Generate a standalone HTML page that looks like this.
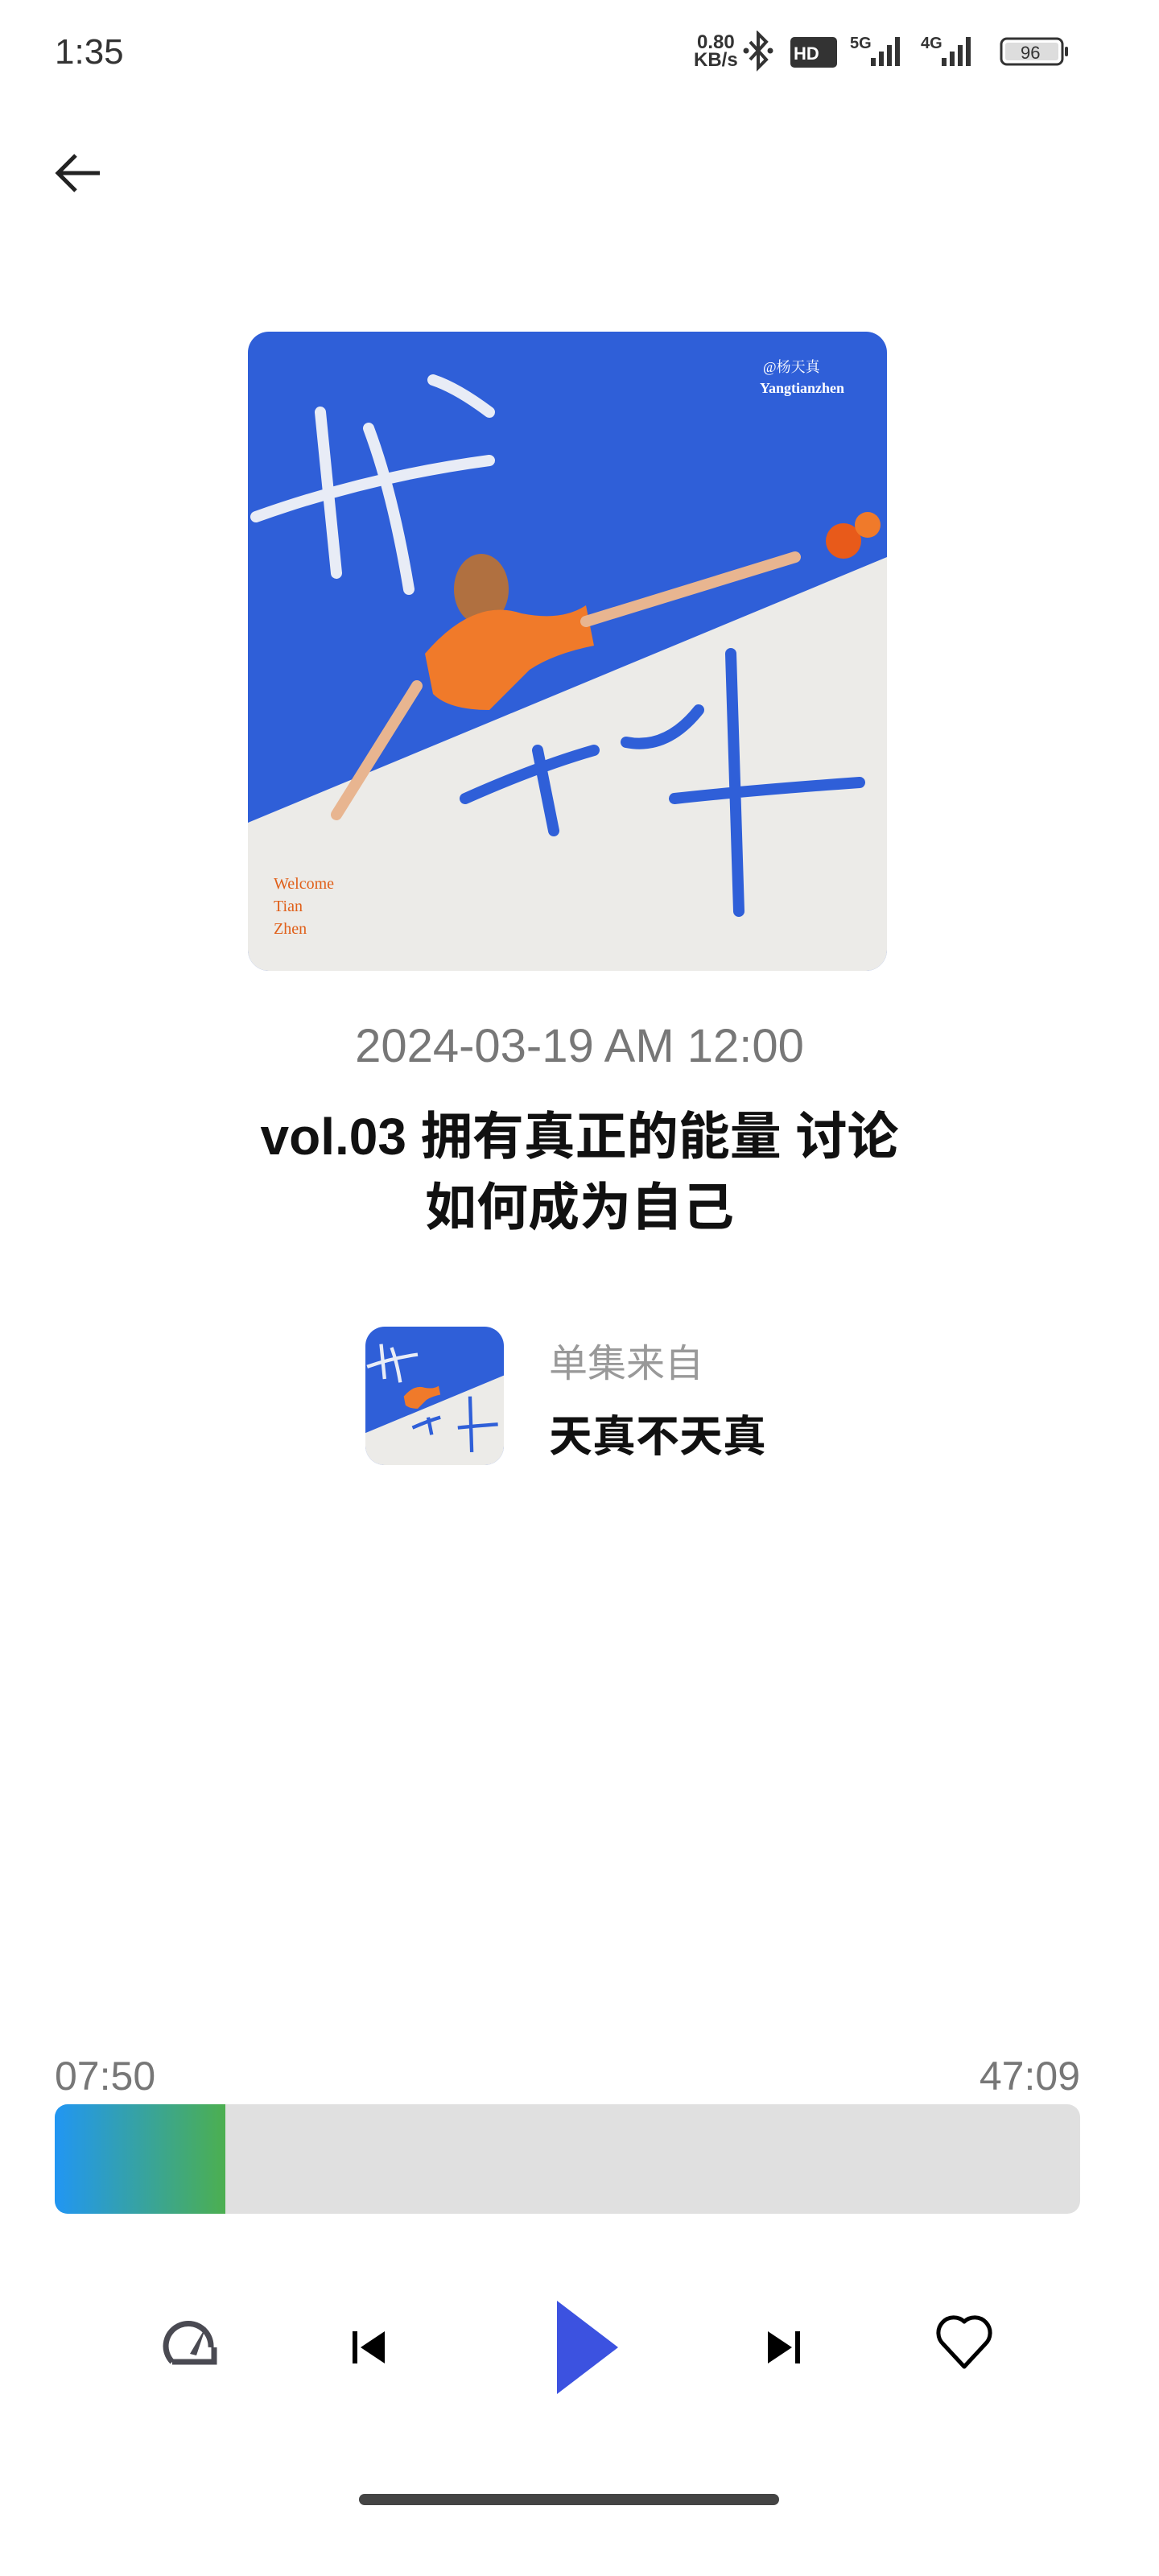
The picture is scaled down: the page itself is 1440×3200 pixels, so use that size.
<!DOCTYPE html>
<html><head><meta charset="utf-8"><style>
*{margin:0;padding:0;box-sizing:border-box}
body{width:1440px;height:3200px;background:#fff;position:relative;overflow:hidden;font-family:"Liberation Sans","Noto Sans CJK SC",sans-serif}
.a{position:absolute}
</style></head><body>
<div class="a" style="left:68px;top:40px;font-size:44px;color:#333">1:35</div>
<div class="a" style="left:862px;top:42px;font-size:24px;line-height:22px;font-weight:bold;color:#333;text-align:center">0.80<br>KB/s</div>
<svg class="a" style="left:922px;top:38px" width="420" height="54" viewBox="0 0 420 54">
<path d="M10 14 L30 36 L20 46 L20 4 L30 14 L10 36" fill="none" stroke="#333" stroke-width="4"/>
<circle cx="5" cy="25" r="3.5" fill="#333"/><circle cx="35" cy="25" r="3.5" fill="#333"/>
<rect x="60" y="8" width="58" height="38" rx="5" fill="#333"/>
<text x="64" y="36" font-size="22" font-weight="bold" fill="#fff" font-family="Liberation Sans">HD</text>
<text x="134" y="22" font-size="20" font-weight="bold" fill="#333" font-family="Liberation Sans">5G</text>
<rect x="160" y="34" width="6" height="10" fill="#333"/><rect x="170" y="26" width="6" height="18" fill="#333"/><rect x="180" y="18" width="6" height="26" fill="#333"/><rect x="190" y="8" width="6" height="36" fill="#333"/>
<text x="222" y="22" font-size="20" font-weight="bold" fill="#333" font-family="Liberation Sans">4G</text>
<rect x="248" y="34" width="6" height="10" fill="#333"/><rect x="258" y="26" width="6" height="18" fill="#333"/><rect x="268" y="18" width="6" height="26" fill="#333"/><rect x="278" y="8" width="6" height="36" fill="#333"/>
<rect x="322" y="10" width="76" height="32" rx="7" fill="none" stroke="#333" stroke-width="3"/>
<rect x="327" y="15" width="66" height="22" rx="3" fill="#ddd"/>
<text x="346" y="35" font-size="22" fill="#333" font-family="Liberation Sans">96</text>
<rect x="401" y="20" width="4" height="12" rx="2" fill="#333"/>
</svg>
<svg class="a" style="left:66px;top:188px" width="64" height="54" viewBox="0 0 64 54"><path d="M58 27 H8 M28 5 L6 27 L28 49" fill="none" stroke="#222" stroke-width="5"/></svg>

<svg class="a" style="left:308px;top:412px" width="794" height="794" viewBox="0 0 794 794">
<defs><clipPath id="c"><rect width="794" height="794" rx="26"/></clipPath></defs>
<g clip-path="url(#c)">
<rect width="794" height="794" fill="#2f5fd8"/>
<polygon points="0,610 794,280 794,794 0,794" fill="#ecebe8"/>
<path d="M10 230 Q150 180 300 160 M90 100 L110 300 M150 120 Q180 200 200 320 M230 60 Q260 70 300 100" stroke="#e8ecf6" stroke-width="14" fill="none" stroke-linecap="round"/>
<path d="M270 580 Q360 540 430 520 M360 520 L380 620 M470 510 Q520 520 560 470 M600 400 L610 720 M530 580 Q620 570 760 560" stroke="#2f5fd8" stroke-width="14" fill="none" stroke-linecap="round"/>
<ellipse cx="290" cy="320" rx="34" ry="44" fill="#b07040"/>
<path d="M220 400 Q280 330 340 350 Q390 360 420 340 L430 390 Q380 400 350 420 L300 470 Q250 470 230 450 Z" fill="#f07a2a"/>
<path d="M210 440 L110 600 M420 360 L680 280" stroke="#e8b590" stroke-width="14" stroke-linecap="round"/>
<circle cx="740" cy="260" r="22" fill="#e85a1a"/><circle cx="770" cy="240" r="16" fill="#f07a2a"/>
<text x="640" y="50" font-size="18" fill="#fff" font-family="Liberation Serif,Noto Serif CJK SC,serif">@杨天真</text>
<text x="636" y="76" font-size="18" font-weight="bold" fill="#fff" font-family="Liberation Serif,serif">Yangtianzhen</text>
<text x="32" y="692" font-size="20" fill="#e0601a" font-family="Liberation Serif,serif">Welcome</text>
<text x="32" y="720" font-size="20" fill="#e0601a" font-family="Liberation Serif,serif">Tian</text>
<text x="32" y="748" font-size="20" fill="#e0601a" font-family="Liberation Serif,serif">Zhen</text>
</g></svg>

<div class="a" style="left:0;width:1440px;top:1266px;text-align:center;font-size:58px;color:#777">2024-03-19 AM 12:00</div>
<div class="a" style="left:0;width:1440px;top:1368px;text-align:center;font-size:64px;line-height:88px;font-weight:bold;color:#111">vol.03 拥有真正的能量 讨论<br>如何成为自己</div>

<svg class="a" style="left:454px;top:1648px" width="172" height="172" viewBox="0 0 794 794">
<defs><clipPath id="c2"><rect width="794" height="794" rx="110"/></clipPath></defs>
<g clip-path="url(#c2)">
<rect width="794" height="794" fill="#2f5fd8"/>
<polygon points="0,610 794,280 794,794 0,794" fill="#ecebe8"/>
<path d="M10 230 Q150 180 300 160 M90 100 L110 300 M150 120 Q180 200 200 320" stroke="#e8ecf6" stroke-width="20" fill="none"/>
<path d="M270 580 Q360 540 430 520 M360 520 L380 620 M600 400 L610 720 M530 580 Q620 570 760 560" stroke="#2f5fd8" stroke-width="20" fill="none"/>
<path d="M220 400 Q280 330 340 350 Q390 360 420 340 L430 390 Q380 400 350 420 L300 470 Q250 470 230 450 Z" fill="#f07a2a"/>
</g></svg>
<div class="a" style="left:682px;top:1654px;font-size:48px;color:#999">单集来自</div>
<div class="a" style="left:682px;top:1740px;font-size:54px;font-weight:bold;color:#111">天真不天真</div>

<div class="a" style="left:68px;top:2550px;font-size:50px;color:#777">07:50</div>
<div class="a" style="right:98px;top:2550px;font-size:50px;color:#777">47:09</div>
<div class="a" style="left:68px;top:2614px;width:1274px;height:136px;background:#e0e0e0;border-radius:16px;overflow:hidden">
<div style="width:212px;height:100%;background:linear-gradient(90deg,#2196f3,#4caf50)"></div></div>

<svg class="a" style="left:200px;top:2872px" width="80" height="80" viewBox="0 0 80 80">
<path d="M14 62 A28 28 0 1 1 62 44" fill="none" stroke="#4a4a52" stroke-width="7"/>
<path d="M14 62 H66 V44" fill="none" stroke="#4a4a52" stroke-width="7"/>
<path d="M36 52 L56 18 L44 54 Z" fill="#4a4a52"/>
</svg>
<svg class="a" style="left:432px;top:2890px" width="52" height="52" viewBox="0 0 52 52"><rect x="6" y="6" width="6" height="40" fill="#000"/><path d="M46 6 L16 26 L46 46 Z" fill="#000"/></svg>
<svg class="a" style="left:690px;top:2856px" width="82" height="120" viewBox="0 0 82 120"><path d="M2 2 L78 60 L2 118 Z" fill="#3c52e0"/></svg>
<svg class="a" style="left:948px;top:2890px" width="52" height="52" viewBox="0 0 52 52"><rect x="40" y="6" width="6" height="40" fill="#000"/><path d="M6 6 L36 26 L6 46 Z" fill="#000"/></svg>
<svg class="a" style="left:1160px;top:2870px" width="76" height="80" viewBox="0 0 76 80"><path d="M38 70 L12 42 A16 16 0 0 1 38 14 A16 16 0 0 1 64 42 Z" fill="none" stroke="#000" stroke-width="5" stroke-linejoin="round"/></svg>

<div class="a" style="left:446px;top:3098px;width:522px;height:14px;border-radius:7px;background:#444"></div>
</body></html>
